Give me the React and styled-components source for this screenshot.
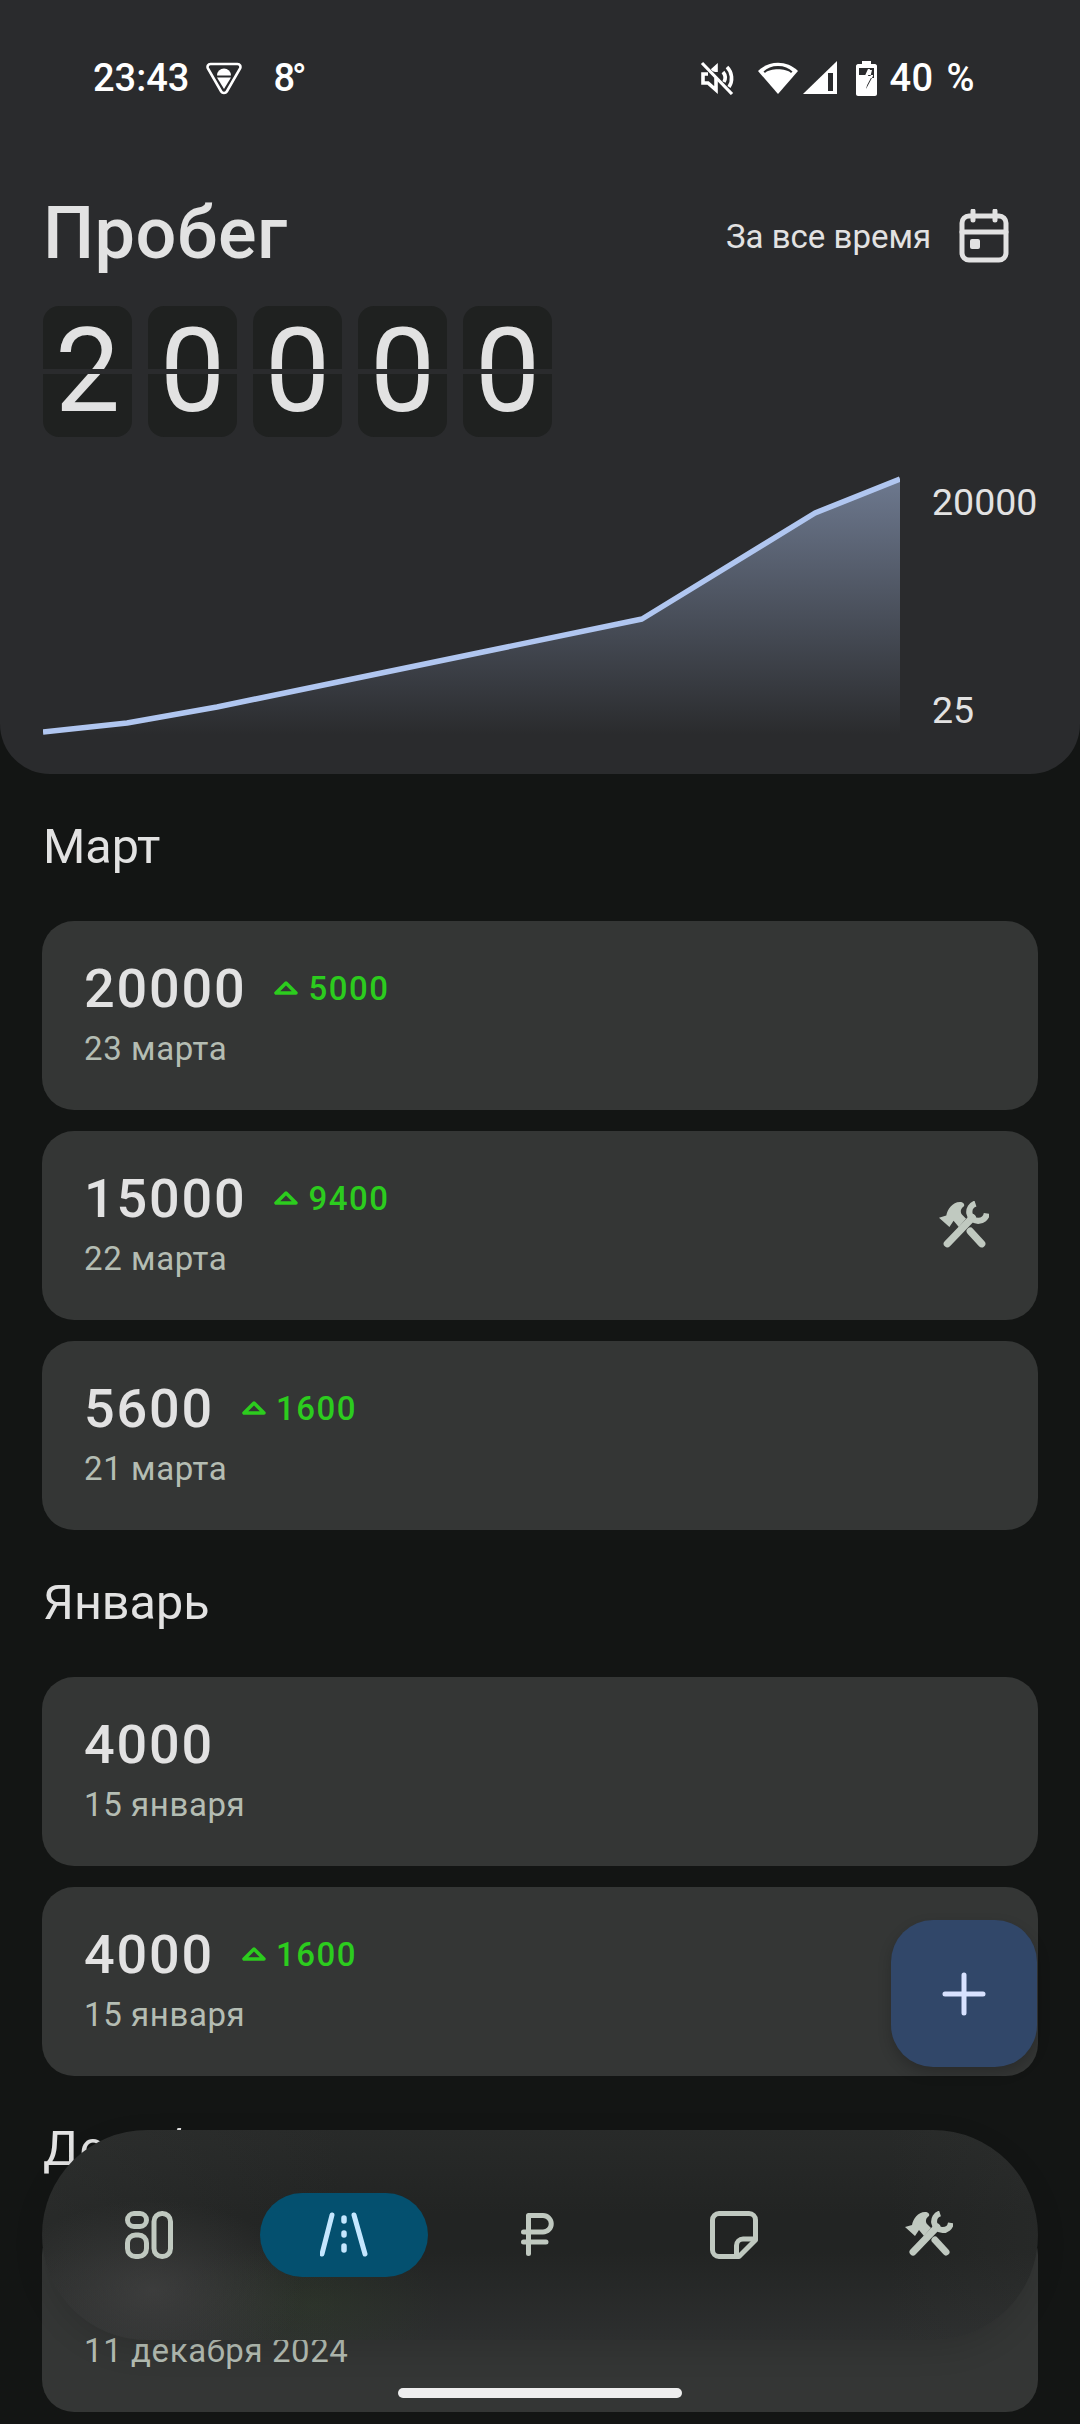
import React from 'react';
import styled, { createGlobalStyle } from 'styled-components';

const GlobalStyle = createGlobalStyle`
    html, body {
        margin: 0;
        padding: 0;
        background: #131514;
    }
    body {
        font-family: Roboto, "Noto Sans", sans-serif;
    }
`;

const Screen = styled.div`
    position: relative;
    width: 1080px;
    height: 2424px;
    overflow: hidden;
    background: #131514;
`;

const Header = styled.header`
    background: #2a2b2d;
    border-radius: 0 0 50px 50px;
    padding: 50px 42px 33px 43px;
    height: 774px;
    box-sizing: border-box;
`;

const StatusBar = styled.div`
    display: flex;
    justify-content: space-between;
    align-items: center;
    height: 56px;
    padding: 0 63px 0 50px;
    color: #fff;
    font-size: 38px;
    font-weight: 500;
`;

const StatusGroup = styled.div`
    display: flex;
    align-items: center;
`;

const Battery = styled.span`
    margin-left: 12px;
    letter-spacing: 0.5px;
    word-spacing: 3px;
`;

const Temp = styled.span`
    margin-left: 31px;
    letter-spacing: -3px;
`;

const TitleRow = styled.div`
    display: flex;
    justify-content: space-between;
    align-items: center;
    height: 84px;
    margin-top: 86px;
    padding-right: 29px;
`;

const Title = styled.h1`
    margin: 0;
    font-size: 72px;
    font-weight: 500;
    line-height: 84px;
    color: #e2e2e2;
    letter-spacing: 0.5px;
`;

const PeriodButton = styled.div`
    display: flex;
    align-items: center;
    gap: 28px;
    margin-top: 4px;
    color: #e2e2e2;
    font-size: 33px;
`;

const FlipRow = styled.div`
    display: flex;
    gap: 16px;
    margin-top: 30px;
`;

const FlipCard = styled.div`
    position: relative;
    width: 89px;
    height: 131px;
    border-radius: 16px;
    background: #1f2120;
    color: #e2e2e2;
    font-size: 116px;
    line-height: 131px;
    text-align: center;

    &::after {
        content: '';
        position: absolute;
        left: 0;
        right: 0;
        top: 63px;
        height: 5px;
        background: #2a2b2d;
    }
`;

const ChartRow = styled.div`
    display: flex;
    margin-top: 33px;
    height: 270px;
`;

const ChartSvg = styled.svg`
    display: block;
    flex: none;
`;

const ChartScale = styled.div`
    display: flex;
    flex-direction: column;
    justify-content: space-between;
    padding: 10px 0 8px 32px;
    color: #e2e2e2;
    font-size: 37.5px;
    line-height: 44px;
`;

const Main = styled.main`
    padding: 45px 42px 0;
`;

const SectionTitle = styled.h2`
    margin: 0 0 46px 1px;
    font-size: 48.5px;
    font-weight: 400;
    line-height: 56px;
    color: #e2e2e2;
`;

const CardList = styled.div`
    display: flex;
    flex-direction: column;
    gap: 21px;
    margin-bottom: 45px;
`;

const Card = styled.div`
    display: flex;
    justify-content: space-between;
    align-items: center;
    height: 189px;
    box-sizing: border-box;
    padding: 0 49px 4px 42px;
    border-radius: 32px;
    background: #343635;
`;

const CardText = styled.div`
    display: flex;
    flex-direction: column;
    gap: 11px;
`;

const ValueRow = styled.div`
    display: flex;
    align-items: center;
    gap: 28px;
    height: 60px;
`;

const Value = styled.span`
    color: #e2e2e2;
    font-size: 54px;
    font-weight: 500;
    letter-spacing: 1.8px;
`;

const Delta = styled.span`
    display: flex;
    align-items: center;
    gap: 10px;
    color: #2ccc1e;
    font-size: 33px;
    font-weight: 500;
    letter-spacing: 1.5px;
`;

const DateLabel = styled.span`
    color: #b4bdb3;
    font-size: 33px;
    line-height: 40px;
    letter-spacing: 0.6px;
`;

const ServiceMark = styled.div`
    display: flex;
    margin-top: 4px;
    color: #c0c9c0;
`;

const Fab = styled.button`
    position: absolute;
    left: 891px;
    top: 1920px;
    width: 146px;
    height: 147px;
    display: flex;
    align-items: center;
    justify-content: center;
    padding: 0;
    border: none;
    border-radius: 42px;
    background: #314769;
    box-shadow: 0 6px 14px rgba(0, 0, 0, 0.2);
`;

const BottomNav = styled.nav`
    position: absolute;
    left: 42px;
    top: 2130px;
    width: 996px;
    height: 210px;
    box-sizing: border-box;
    padding: 0 9px;
    display: grid;
    grid-template-columns: repeat(5, 195px);
    align-items: center;
    justify-items: center;
    border-radius: 105px;
    background:
        radial-gradient(ellipse 150px 90px at 110px 160px, rgba(72, 72, 72, 0.6), transparent),
        radial-gradient(ellipse 130px 70px at 270px 175px, rgba(52, 72, 42, 0.28), transparent),
        linear-gradient(90deg, rgba(52, 54, 53, 0.35), transparent 30%, transparent 85%, rgba(52, 54, 53, 0.25)),
        linear-gradient(180deg, #282a29 0%, #222423 40%, #222423 58%, #2d2f2f 100%);
    box-shadow: 0 10px 30px rgba(0, 0, 0, 0.12);
`;

const NavItem = styled.div`
    width: 168px;
    height: 84px;
    display: flex;
    align-items: center;
    justify-content: center;
    border-radius: 42px;
    color: ${(p) => (p.$active ? '#c5e7ff' : '#c0c9c0')};
    background: ${(p) => (p.$active ? '#04506f' : 'transparent')};
`;

const HomeBar = styled.div`
    position: absolute;
    left: 398px;
    top: 2388px;
    width: 284px;
    height: 10px;
    border-radius: 5px;
    background: #eeeeee;
`;

const ShieldIcon = () => (
    <svg width="36" height="33" viewBox="0 0 36 33" style={{ marginLeft: 17 }}>
        <path d="M4.500 2h27c2.500 0 3.500 2.500 2.600 4.300L20.800 29.500c-1.200 2-4.400 2-5.600 0L1.900 6.300C1 4.500 2 2 4.500 2z" fill="none" stroke="#fff" strokeWidth="2.600" />
        <path d="M11 13.500a7 7 0 0 1 14 0z" fill="#fff" />
        <path d="M11 15.500h14L18 27z" fill="#fff" />
    </svg>
);

const MuteIcon = () => (
    <svg width="34" height="34" viewBox="0 0 34 34" fill="none" stroke="#fff" strokeWidth="3.600">
        <path d="M8 13H3v9h5l8 7V17M16 11V6l-4 3.500" />
        <path d="M23 11a9 9 0 0 1 1 10M27 6a16 16 0 0 1 2 20" />
        <path d="M2 2l30 31" strokeWidth="3.200" />
    </svg>
);

const WifiIcon = () => (
    <svg width="42" height="36" viewBox="0 0 42 36" style={{ marginLeft: 23 }}>
        <path d="M21 34L1 11C12 0 30 0 41 11z" fill="#fff" />
        <path d="M21 6C15 6 10 8 6.500 11.500L8 13C13 8 29 8 34 13l1.500-1.500C32 8 27 6 21 6z" fill="#2a2b2d" />
    </svg>
);

const SignalIcon = () => (
    <svg width="34" height="34" viewBox="0 0 34 34" style={{ marginLeft: 4 }}>
        <path d="M0 33L34 0v33z" fill="#fff" />
        <path d="M25 12h5v18h-5z" fill="#2a2b2d" />
    </svg>
);

const BatteryIcon = () => (
    <svg width="21" height="35" viewBox="0 0 21 35" style={{ marginLeft: 19 }}>
        <path d="M6 0h9v3h4c1 0 2 1 2 2v28c0 1-1 2-2 2H2c-1 0-2-1-2-2V5c0-1 1-2 2-2h4z" fill="#fff" />
        <path d="M3 7h15v10h-4l2-8h-3l-4 10h3l-2 9 7-13v-1H3z" fill="#2a2b2d" />
        <path d="M12 8l-5 11h4l-2 9 7-13h-4l2-7z" fill="#fff" />
    </svg>
);

const CalendarIcon = () => (
    <svg width="50" height="54" viewBox="0 0 50 54" fill="none" stroke="#e2e2e2" strokeWidth="5">
        <rect x="3" y="7" width="44" height="44" rx="7" />
        <path d="M3 23h44M14 2v9M36 2v9" strokeLinecap="round" />
        <rect x="11" y="30" width="10" height="10" rx="2" fill="#e2e2e2" stroke="none" />
    </svg>
);

const DeltaIcon = () => (
    <svg width="24" height="14" viewBox="0 0 24 14" fill="none" stroke="#2ccc1e" strokeWidth="3.500" strokeLinejoin="round">
        <path d="M12 2L2 12h20z" />
    </svg>
);

const PlusIcon = () => (
    <svg width="44" height="44" viewBox="0 0 44 44" stroke="#d8e2ff" strokeWidth="5" strokeLinecap="round">
        <path d="M22 3v38M3 22h38" />
    </svg>
);

const DashboardIcon = () => (
    <svg width="48" height="48" viewBox="0 0 48 48" fill="none" stroke="currentColor" strokeWidth="5">
        <rect x="2.500" y="2.500" width="19" height="13" rx="6.500" />
        <rect x="2.500" y="24" width="19" height="21.500" rx="8" />
        <rect x="29" y="2.500" width="16.500" height="43" rx="8" />
    </svg>
);

const RoadIcon = () => (
    <svg width="48" height="48" viewBox="0 0 48 48" fill="none" stroke="currentColor" strokeWidth="5" strokeLinecap="round">
        <path d="M12 4L2 43M34 4l11 39" />
        <path d="M24 7v3M24 22v2M24 35v4" strokeWidth="5.500" />
    </svg>
);

const RubleIcon = () => (
    <svg width="36" height="44" viewBox="0 0 36 44" fill="none" stroke="currentColor" strokeWidth="5" strokeLinecap="round">
        <path d="M7.500 2.500v38M2.500 19H22a8.250 8.250 0 0 0 0-16.500H7.500M2.500 29H25" />
    </svg>
);

const NoteIcon = () => (
    <svg width="48" height="48" viewBox="0 0 48 48" fill="none" stroke="currentColor" strokeWidth="5" strokeLinejoin="round">
        <path d="M9 2.500h30a6.500 6.500 0 0 1 6.500 6.500v20L29 45.500H9A6.500 6.500 0 0 1 2.500 39V9A6.500 6.500 0 0 1 9 2.500z" />
        <path d="M45.500 28H33a6.500 6.500 0 0 0-6.500 6.500V45" />
    </svg>
);

const ToolsIcon = ({ size = 48 }) => (
    <svg width={size} height={size} viewBox="0 0 48 48" fill="none" stroke="currentColor">
        <path d="M8 41L32 16" strokeWidth="7" strokeLinecap="round" />
        <path d="M30 29l11 12" strokeWidth="7" strokeLinecap="round" />
        <path d="M35 2.500A8.500 8.500 0 1 0 46 12" strokeWidth="6" />
        <path d="M0 16L7 14C8 8 13 1 20 1C23 1 25 3 24 5C21 7 20 10 22 13L26 17L19 25L14 19L10 25z" fill="currentColor" stroke="none" />
    </svg>
);

const chartLine = '0,262 84,253 174,237 599,149 772,43 857,9';

const months = [
    {
        title: 'Март',
        rows: [
            { value: '20000', delta: '5000', date: '23 марта' },
            { value: '15000', delta: '9400', date: '22 марта', service: true },
            { value: '5600', delta: '1600', date: '21 марта' },
        ],
    },
    {
        title: 'Январь',
        rows: [
            { value: '4000', date: '15 января' },
            { value: '4000', delta: '1600', date: '15 января' },
        ],
    },
    {
        title: 'Декабрь',
        rows: [{ date: '11 декабря 2024' }],
    },
];

const App = () => (
    <Screen>
        <GlobalStyle />
        <Header>
            <StatusBar>
                <StatusGroup>
                    <span>23:43</span>
                    <ShieldIcon />
                    <Temp>8°</Temp>
                </StatusGroup>
                <StatusGroup>
                    <MuteIcon />
                    <WifiIcon />
                    <SignalIcon />
                    <BatteryIcon />
                    <Battery>40 %</Battery>
                </StatusGroup>
            </StatusBar>

            <TitleRow>
                <Title>Пробег</Title>
                <PeriodButton>
                    За все время
                    <CalendarIcon />
                </PeriodButton>
            </TitleRow>

            <FlipRow>
                {'20000'.split('').map((digit, i) => (
                    <FlipCard key={i}>{digit}</FlipCard>
                ))}
            </FlipRow>

            <ChartRow>
                <ChartSvg width="857" height="270" viewBox="0 0 857 270">
                    <defs>
                        <linearGradient id="chartFill" x1="0" y1="0" x2="0" y2="1">
                            <stop offset="0" stopColor="#b0c6f0" stopOpacity="0.5" />
                            <stop offset="1" stopColor="#b0c6f0" stopOpacity="0" />
                        </linearGradient>
                    </defs>
                    <polygon points={`${chartLine} 857,265 0,265`} fill="url(#chartFill)" />
                    <polyline points={chartLine} fill="none" stroke="#b0c6f0" strokeWidth="5.500" strokeLinejoin="round" />
                </ChartSvg>
                <ChartScale>
                    <span>20000</span>
                    <span>25</span>
                </ChartScale>
            </ChartRow>
        </Header>

        <Main>
            {months.map((month) => (
                <section key={month.title}>
                    <SectionTitle>{month.title}</SectionTitle>
                    <CardList>
                        {month.rows.map((row, i) => (
                            <Card key={i}>
                                <CardText>
                                    <ValueRow>
                                        {row.value && <Value>{row.value}</Value>}
                                        {row.delta && (
                                            <Delta>
                                                <DeltaIcon />
                                                {row.delta}
                                            </Delta>
                                        )}
                                    </ValueRow>
                                    <DateLabel>{row.date}</DateLabel>
                                </CardText>
                                {row.service && (
                                    <ServiceMark>
                                        <ToolsIcon size={50} />
                                    </ServiceMark>
                                )}
                            </Card>
                        ))}
                    </CardList>
                </section>
            ))}
        </Main>

        <Fab aria-label="add">
            <PlusIcon />
        </Fab>

        <BottomNav>
            <NavItem><DashboardIcon /></NavItem>
            <NavItem $active><RoadIcon /></NavItem>
            <NavItem><RubleIcon /></NavItem>
            <NavItem><NoteIcon /></NavItem>
            <NavItem><ToolsIcon /></NavItem>
        </BottomNav>

        <HomeBar />
    </Screen>
);

export default App;
